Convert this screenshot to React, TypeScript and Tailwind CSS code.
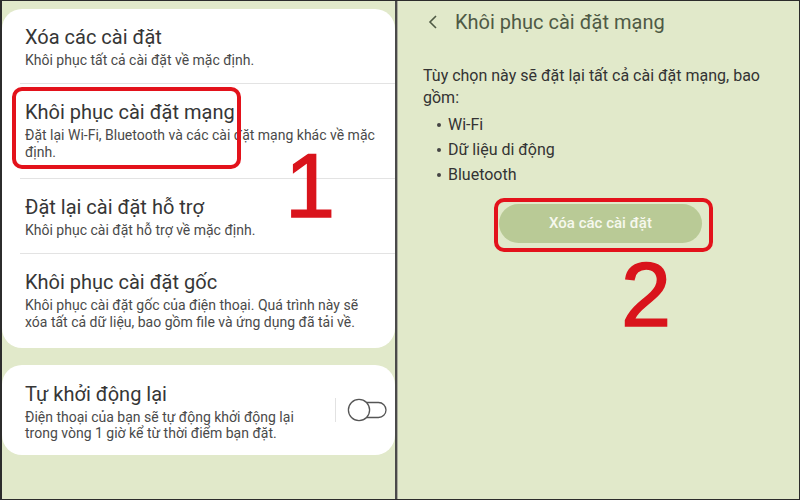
import React from "react";

const font = { fontFamily: "Roboto, 'Noto Sans', Arial, sans-serif" };

function Item({ title, sub, h }: { title: string; sub: React.ReactNode; h: string }) {
  return (
    <div className={`${h} pt-[15px] pl-[23px] pr-[12px]`}>
      <div className="text-[20px] leading-[26px] text-[#363636]">{title}</div>
      <div className="mt-[2px] text-[14px] leading-[17px] text-[#4a4a4a]">{sub}</div>
    </div>
  );
}

function Divider() {
  return <div className="ml-[18px] h-px bg-[#e3e3e3]" />;
}

export default function App() {
  return (
    <div
      className="relative flex h-[500px] w-[800px] overflow-hidden border-y border-l-2 border-r border-[#2c2c2c] bg-[#e1e9ca]"
      style={font}
    >
      {/* Left panel */}
      <div className="flex w-[393px] flex-col bg-[#e1e9ca] pt-[8px]">
        <div className="rounded-[20px] bg-white">
          <Item h="h-[74px]" title="Xóa các cài đặt" sub="Khôi phục tất cả cài đặt về mặc định." />
          <Divider />
          <Item
            h="h-[94px]"
            title="Khôi phục cài đặt mạng"
            sub="Đặt lại Wi-Fi, Bluetooth và các cài đặt mạng khác về mặc định."
          />
          <Divider />
          <Item h="h-[74px]" title="Đặt lại cài đặt hỗ trợ" sub="Khôi phục cài đặt hỗ trợ về mặc định." />
          <Divider />
          <Item
            h="h-[94px]"
            title="Khôi phục cài đặt gốc"
            sub="Khôi phục cài đặt gốc của điện thoại. Quá trình này sẽ xóa tất cả dữ liệu, bao gồm file và ứng dụng đã tải về."
          />
        </div>
        <div className="mt-[17px] flex h-[90px] items-center rounded-[20px] bg-white">
          <div className="h-full w-[318px] pt-[16px] pl-[23px]">
            <div className="text-[20px] leading-[26px] text-[#363636]">Tự khởi động lại</div>
            <div className="mt-[2px] text-[14px] leading-[16px] text-[#4a4a4a]">
              Điện thoại của bạn sẽ tự động khởi động lại trong vòng 1 giờ kể từ thời điểm bạn đặt.
            </div>
          </div>
          <div className="ml-[15px] h-[24px] w-px bg-[#e2e2e2]" />
          <svg className="ml-[11px]" width="40" height="24" viewBox="0 0 40 24">
            <rect x="8" y="4.5" width="31" height="15" rx="7.5" fill="white" stroke="#555" strokeWidth="1.3" />
            <circle cx="12" cy="12" r="10.6" fill="white" stroke="#555" strokeWidth="1.3" />
          </svg>
        </div>
      </div>

      {/* Panel separator */}
      <div className="w-[2px] bg-[#4a4a4a]" />
      <div className="w-px bg-[#a9ab9c]" />

      {/* Right panel */}
      <div className="flex flex-1 flex-col bg-[#e1e9ca] pt-[8px]">
        <div className="flex items-center pl-[29px]">
          <svg width="12" height="16" viewBox="0 0 12 16">
            <path d="M9 2 L3 8 L9 14" fill="none" stroke="#4f5a45" strokeWidth="1.6" />
          </svg>
          <div className="ml-[16px] text-[20px] leading-[26px] text-[#4f5a45]">Khôi phục cài đặt mạng</div>
        </div>
        <div className="mt-[30px] pl-[25px] pr-[20px] text-[16px] leading-[22px] text-[#333]">
          Tùy chọn này sẽ đặt lại tất cả cài đặt mạng, bao gồm:
        </div>
        <div className="mt-[3px] flex flex-col pl-[39px] text-[16px] leading-[25px] text-[#333]">
          {["Wi-Fi", "Dữ liệu di động", "Bluetooth"].map((t) => (
            <div key={t} className="flex items-center">
              <span className="mr-[7px] h-[4px] w-[4px] rounded-full bg-[#444]" />
              <span>{t}</span>
            </div>
          ))}
        </div>
        <div className="ml-[101px] mt-[17px] flex h-[39px] w-[203px] items-center justify-center rounded-full bg-[#b9ca96] text-[15px] font-medium text-[#f6f8ee]">
          Xóa các cài đặt
        </div>
      </div>

      {/* Annotations */}
      <div className="absolute left-[10px] top-[86px] h-[82px] w-[229px] rounded-[10px] border-[4px] border-[#e3121b]" />
      <div className="absolute left-[492px] top-[197px] h-[54px] w-[219px] rounded-[10px] border-[4px] border-[#e3121b]" />
      <div
        className="absolute left-[283px] top-[140px] text-[90px] leading-[90px] text-[#d9141c] [-webkit-text-stroke:1.5px_#d9141c]"
        style={{ fontFamily: "'Liberation Sans', Arial, sans-serif" }}
      >
        1
      </div>
      <div
        className="absolute left-[619px] top-[249px] text-[90px] leading-[90px] text-[#d9141c] [-webkit-text-stroke:1.5px_#d9141c]"
        style={{ fontFamily: "'Liberation Sans', Arial, sans-serif" }}
      >
        2
      </div>
    </div>
  );
}
